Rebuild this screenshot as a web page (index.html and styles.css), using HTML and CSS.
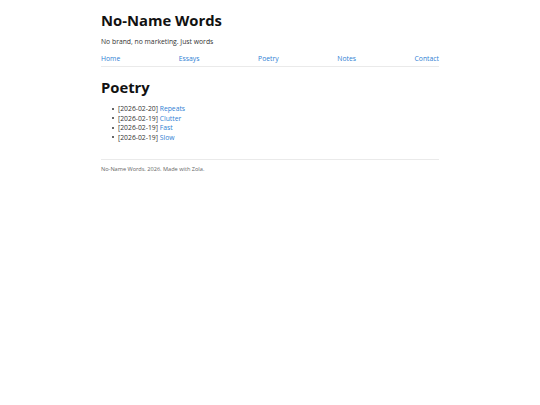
FILE: index.html
```html
<!DOCTYPE html>
<html>
<head>
<meta charset="utf-8">
<link rel="stylesheet" href="styles.css">
</head>
<body>
<div class="page">
  <header class="header">
    <h1 class="title">No-Name Words</h1>
    <p class="tagline">No brand, no marketing. Just words</p>
    <nav class="nav">
      <a href="#">Home</a>
      <a href="#">Essays</a>
      <a href="#">Poetry</a>
      <a href="#">Notes</a>
      <a href="#">Contact</a>
    </nav>
  </header>
  <main class="main">
    <h2 class="section-title">Poetry</h2>
    <ul class="posts">
      <li>[2026-02-20] <a href="#">Repeats</a></li>
      <li>[2026-02-19] <a href="#">Clutter</a></li>
      <li>[2026-02-19] <a href="#">Fast</a></li>
      <li>[2026-02-19] <a href="#">Slow</a></li>
    </ul>
  </main>
  <footer class="footer">No-Name Words. 2026. Made with Zola.</footer>
</div>
</body>
</html>
```
FILE: styles.css
```css
html, body {
  margin: 0;
  padding: 0;
  background: #fff;
}
body {
  font-family: "Open Sans", sans-serif;
  color: #333;
}
.page {
  width: 338px;
  margin: 0 auto;
  padding-top: 10.7px;
}
a {
  color: #2f7fd4;
  text-decoration: none;
}
.title {
  font-size: 14.8px;
  font-weight: 700;
  margin: 0;
  line-height: 18px;
  color: #111;
}
.tagline {
  font-size: 6.8px;
  margin: 8.3px 0 0;
  line-height: 10px;
}
.nav {
  display: flex;
  justify-content: space-between;
  font-size: 6.8px;
  line-height: 10px;
  margin-top: 6.9px;
  padding-bottom: 2px;
  border-bottom: 1px solid #eaeaea;
}
.section-title {
  font-size: 14.8px;
  font-weight: 700;
  margin: 11.5px 0 0;
  line-height: 18px;
  color: #111;
}
.posts {
  margin: 8px 0 0;
  padding-left: 17px;
  list-style: none;
  font-size: 6.8px;
  line-height: 9.5px;
}
.posts li::before {
  content: "";
  display: inline-block;
  width: 2px;
  height: 2px;
  border-radius: 50%;
  background: #333;
  margin-left: -6.5px;
  margin-right: 4.5px;
  vertical-align: 1.5px;
}
.footer {
  margin-top: 16.5px;
  border-top: 1px solid #eaeaea;
  padding-top: 4.7px;
  font-size: 5.6px;
  line-height: 8px;
  color: #666;
}
```
